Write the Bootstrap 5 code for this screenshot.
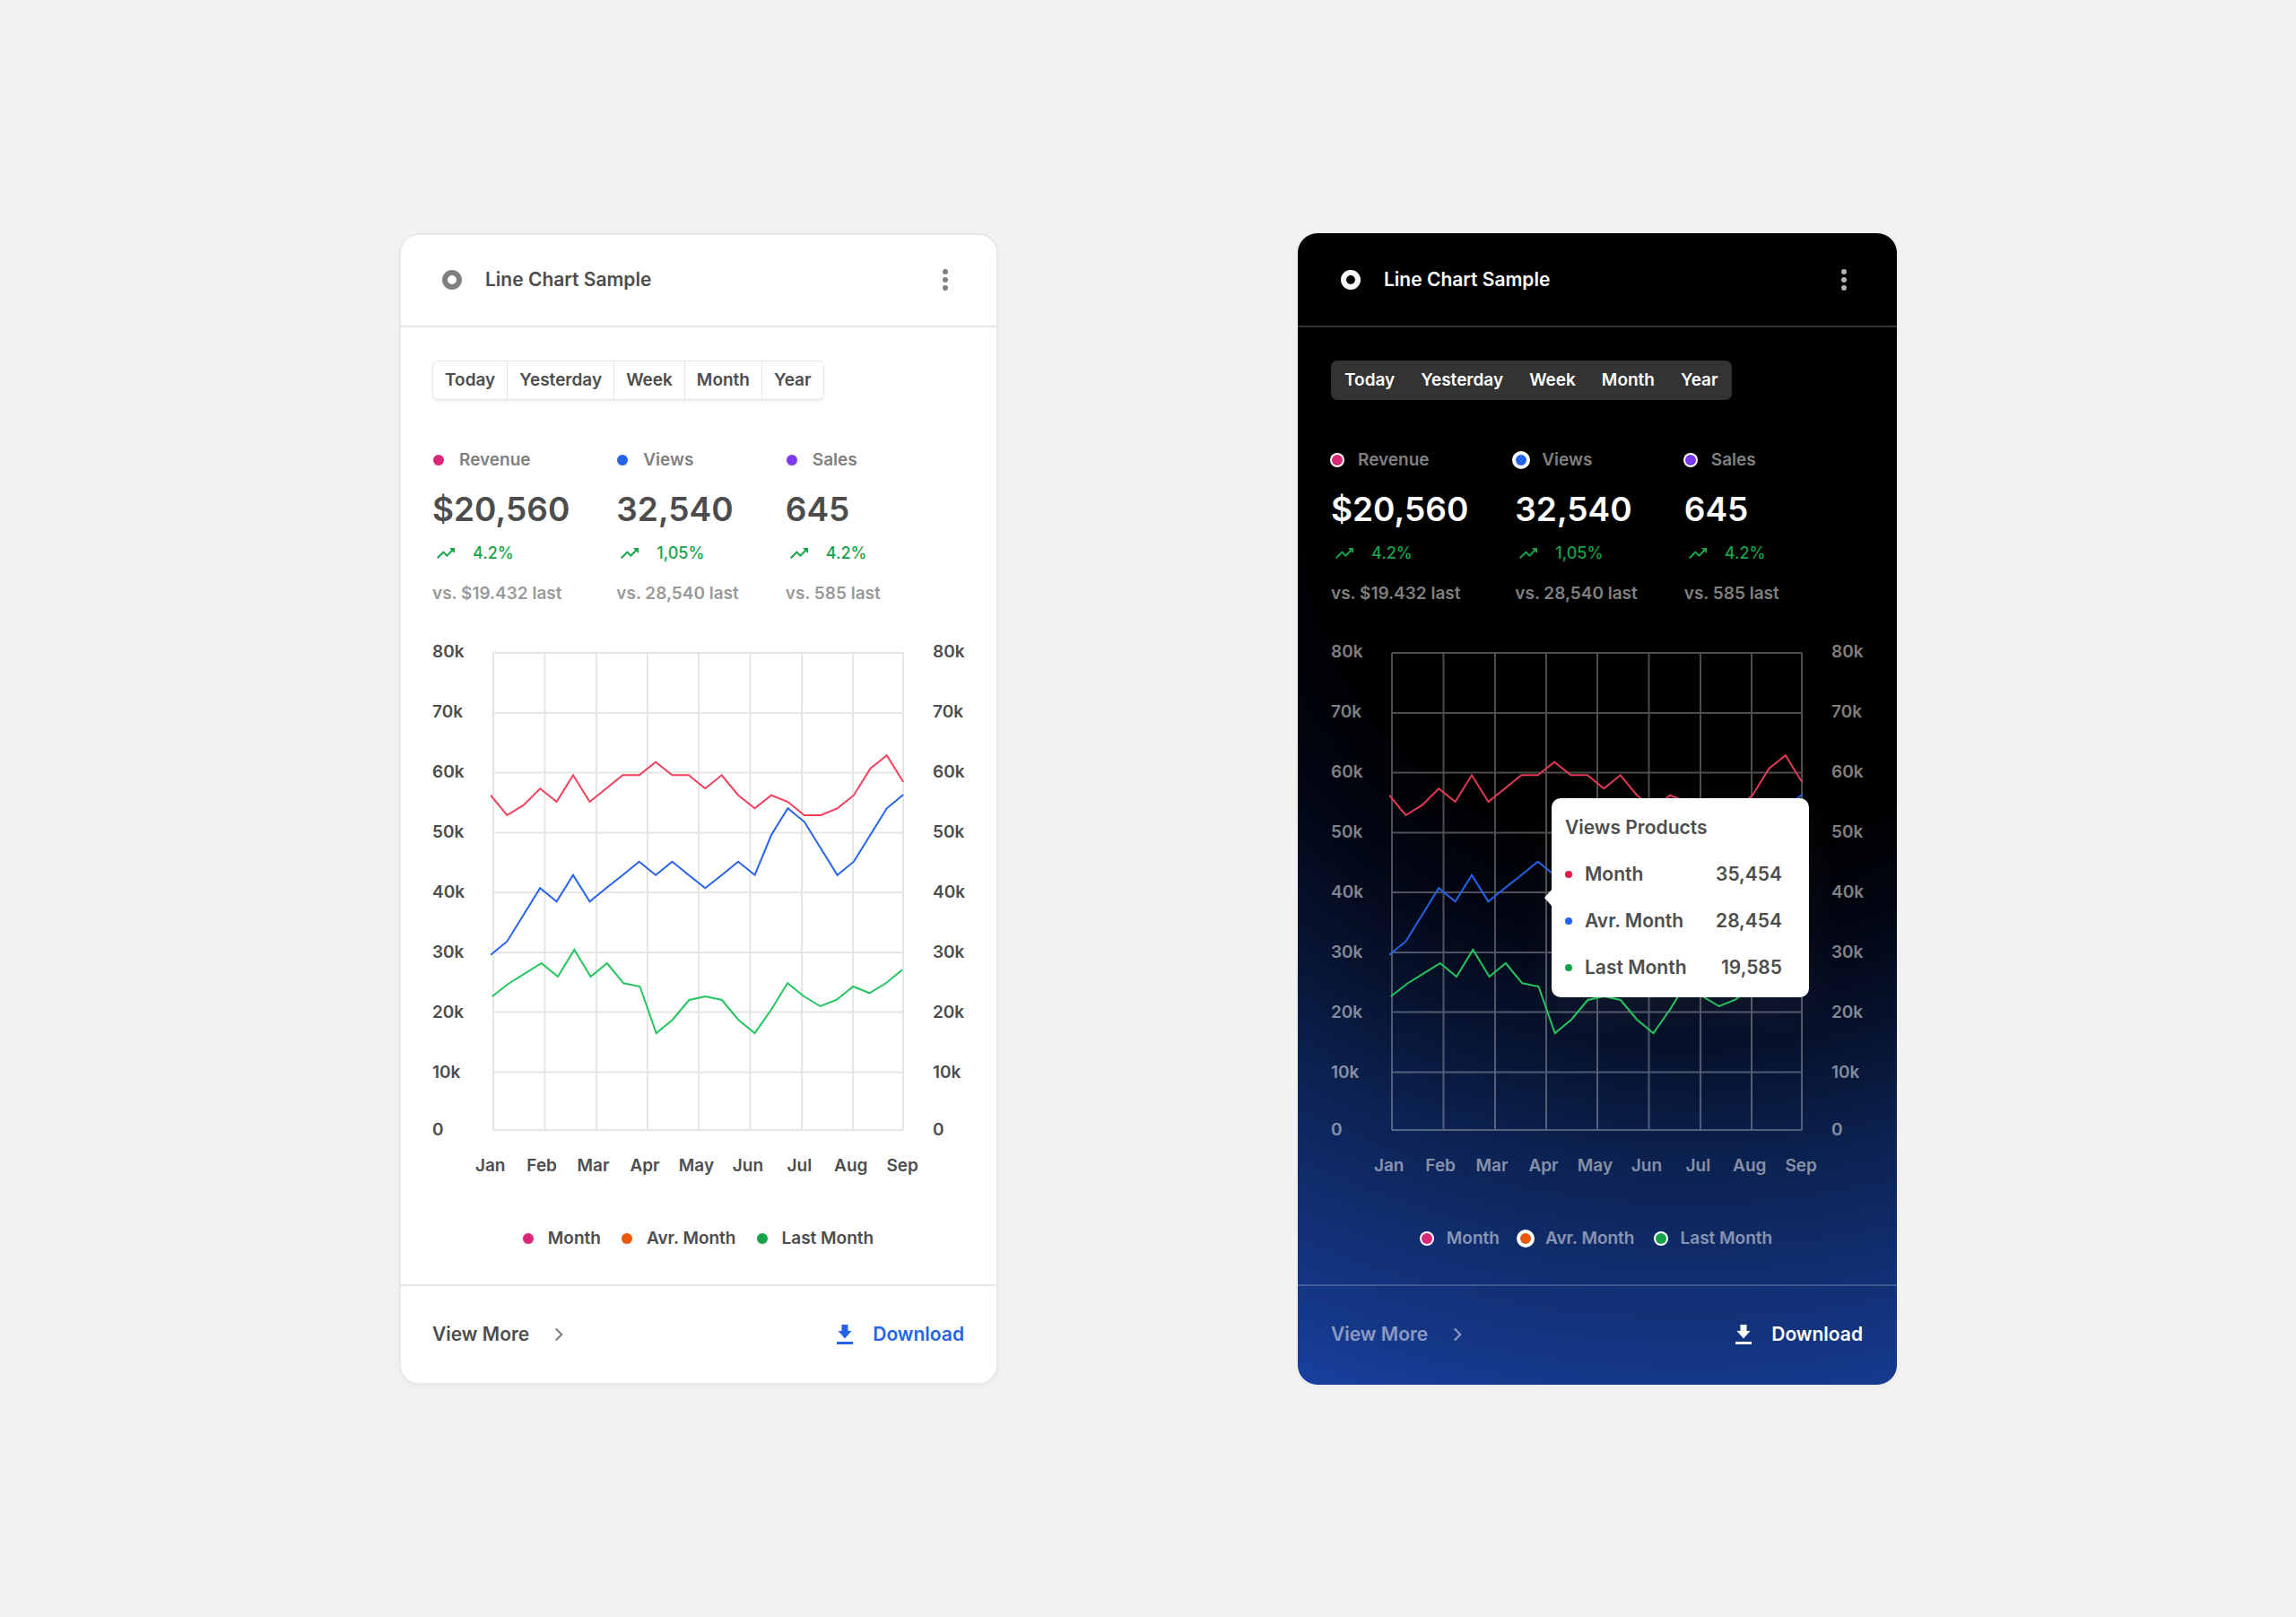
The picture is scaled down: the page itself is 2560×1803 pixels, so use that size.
<!DOCTYPE html>
<html lang="en">
<head>
<meta charset="utf-8">
<meta name="viewport" content="width=device-width, initial-scale=1">
<title>Line Chart Sample</title>
<link rel="stylesheet" href="https://cdn.jsdelivr.net/npm/bootstrap@5.3.0/dist/css/bootstrap.min.css">
<style>
  body { background: #f2f2f2; font-family: Inter, "Liberation Sans", sans-serif; font-size: 19px; line-height: 28px; font-weight: 600; }
  .board { gap: 64px 334px; }

  .chart-card {
    --ink: #4d4d4d; --label: #808080; --faint: #999; --axis: #4d4d4d; --rule: #e5e5e5; --icon: #808080;
    --grid: #e5e5e5; --accent: #2563eb; --up: #16a34a; --ring: 0 2px 3px rgba(0,0,0,.08);
    --red: #f43f5e; --blue: #2563eb; --green: #22c55e;
    width: 100%; max-width: 668px; border: 2px solid #e8e8e8; border-radius: 22px;
    background: #fff; color: var(--ink); box-shadow: 0 3px 6px rgba(0,0,0,.03);
  }
  .chart-card.night {
    --ink: #fff; --label: #808080; --faint: #808080; --axis: rgba(255,255,255,.5); --rule: rgba(255,255,255,.2); --icon: #b3b3b3;
    --grid: rgba(255,255,255,.3); --accent: #fff;
    --ring: 0 0 0 2px #fff;
    --red: #e63956;
    border-color: transparent;
    background:
      linear-gradient(#000 12%, transparent 32%) border-box,
      radial-gradient(ellipse 160% 75% at 65% 25%, #000 38%, #020614 50%, #071431 63%, #0c2252 75%, #112e70 88%, #15388a 100%, #1840a0 108%) border-box;
  }
  .card-top { height: 103px; padding: 0 36px; border-bottom: 2px solid var(--rule); }
  .card-mid { padding: 37px 36px 0 35px; }
  .card-end { height: 110px; padding: 0 36px 0 35px; border-top: 2px solid var(--rule); }
  .night .card-top { margin: 0 -2px; padding: 0 38px; }
  .night .card-end { margin: 0 -2px; padding: 0 38px 0 37px; }
  .fs-head { font-size: 21px; }

  .ring-mark { width: 22px; height: 22px; border: 6px solid var(--icon); border-radius: 50%; margin: 0 26px 0 10px; }
  .night .ring-mark { border-color: #fff; }
  .icon-btn { color: var(--icon); background: none; border: 0; padding: 0; width: 43px; line-height: 0; }

  .range-set { border-radius: 7px; box-shadow: 0 2px 3px rgba(0,0,0,.06); }
  .range-set .btn {
    --bs-btn-color: var(--ink); --bs-btn-border-color: #e6e6e6; --bs-btn-border-width: 1px; --bs-btn-border-radius: 7px;
    --bs-btn-padding-x: 13px; --bs-btn-padding-y: 7px; --bs-btn-font-size: 19px; --bs-btn-font-weight: 600; --bs-btn-line-height: 28px;
    --bs-btn-hover-color: var(--ink); --bs-btn-hover-bg: #f5f5f5; --bs-btn-hover-border-color: #e6e6e6;
  }
  .range-set .btn + .btn { margin-left: 0; }
  .night .range-set { background: #333; }
  .night .range-set .btn { --bs-btn-border-color: transparent; --bs-btn-border-width: 2px; --bs-btn-padding-y: 6px; --bs-btn-hover-bg: #444; --bs-btn-hover-border-color: transparent; }

  .stat-set { gap: 52px; margin-top: 53px; }
  .stat-set h3 { font-size: 19px; line-height: 28px; font-weight: 600; color: var(--label); gap: 17px; margin: 0 0 13px; }
  .stat-set h3 .spot { margin-left: 1px; }
  .stat-value { font-size: 37px; line-height: 56px; }
  .stat-up { color: var(--up); font-size: 18px; font-weight: 500; gap: 18px; padding-left: 3px; margin-top: 7px; }
  .stat-past { color: var(--faint); margin-top: 17px; }
  .spot { display: inline-block; flex: none; width: 12px; height: 12px; border-radius: 50%; box-shadow: var(--ring); }
  .night .spot-on { --ring: 0 0 0 4px #fff; }
  .bg-pink { background: #db2777; } .bg-blue { background: #2563eb; } .bg-violet { background: #7c3aed; }
  .bg-flame { background: #ea580c; } .bg-leaf { background: #16a34a; } .bg-rose { background: #e11d48; }

  .plot { margin-top: 37px; color: var(--axis); }
  .scale-y { width: 65px; line-height: 28px; }
  .scale-y li { height: 67px; }
  .scale-y li:nth-child(8) { height: 64px; }
  .scale-y li:last-child { height: 28px; }
  .scale-r { width: 35px; margin-left: 32px; }
  .plot-area { padding-top: 14px; }
  .plot-area svg { display: block; width: 100%; height: auto; overflow: visible; }
  .scale-x { margin: 25px -27px 0 -29px; }
  .scale-x li { flex: 1 1 0; text-align: center; }

  .legend-set { gap: 23px; margin: 53px 0 37px; }
  .night .legend-set, .night .more-link { color: rgba(255,255,255,.5); }
  .legend-set li { gap: 16px; }
  .foot-link { color: var(--ink); text-decoration: none; gap: 22px; }
  .more-link svg { color: var(--icon); }
  .night .more-link svg { color: inherit; }
  .load-link, .night .load-link { color: var(--accent); }

  .tip-box {
    left: 181px; top: 177px; width: 287px; padding: 19px 30px 19px 15px; z-index: 2;
    background: #fff; color: #4d4d4d; border-radius: 10px; font-size: 21px; box-shadow: 0 20px 50px rgba(255,255,255,.05);
  }
  .tip-box::before { content: ""; position: absolute; left: -8px; top: 102px; border: solid transparent; border-width: 9px 8px 9px 0; border-right-color: #fff; }
  .tip-box li { margin-top: 24px; }
  .tip-box .spot { width: 8px; height: 8px; box-shadow: none; margin-right: 14px; }
</style>
<script src="https://cdn.jsdelivr.net/npm/bootstrap@5.3.0/dist/js/bootstrap.bundle.min.js"></script>
</head>
<body>
<svg class="d-none" aria-hidden="true">
  <symbol id="i-more" viewBox="0 0 32 32"><g fill="currentColor"><circle cx="16" cy="7" r="3"/><circle cx="16" cy="16" r="3"/><circle cx="16" cy="25" r="3"/></g></symbol>
  <symbol id="i-up" viewBox="0 0 24 24"><path fill="currentColor" d="M16 6l2.290 2.290-4.880 4.880-4-4L2 16.590 3.410 18l6-6 4 4 6.300-6.290L22 12V6z"/></symbol>
  <symbol id="i-next" viewBox="0 0 24 24"><path fill="none" stroke="currentColor" stroke-width="2.400" d="M8.500 5l7 7-7 7"/></symbol>
  <symbol id="i-load" viewBox="0 0 18 22"><path fill="currentColor" d="M5.500 0h7v7h4L9 15.500 1.500 7h4zM0 19h18v3H0z"/></symbol>
  <symbol id="chart" viewBox="0 0 461 534">
    <path fill="none" stroke="var(--grid)" stroke-width="2" d="M3 1H460M3 68H460M3 134.500H460M3 201.500H460M3 268H460M3 335H460M3 401.500H460M3 468.500H460M3 533H460M3 1V533M60.500 1V533M118 1V533M175 1V533M232 1V533M289.500 1V533M347 1V533M404 1V533M460 1V533"/>
    <g fill="none" stroke-width="2">
      <polyline stroke="var(--red)" points="0,159.700 18.400,182 36.800,170.700 55.200,152.300 73.600,167 92,137.300 110.500,167 128.900,152.300 147.300,137.300 165.700,137.300 184.100,122.700 202.500,137.300 220.900,137.300 239.300,152.300 257.700,137.300 276.100,159.700 294.600,174.300 313,159.700 331.400,167 349.800,182 368.200,182 386.600,174.300 405,159.700 423.400,130 441.800,115.300 460.200,145"/>
      <polyline stroke="var(--blue)" points="0,337.700 18.400,322.700 36.800,293 55.200,263.300 73.600,278.300 92,248.700 110.500,278.300 128.900,263.300 147.300,248.700 165.700,233.700 184.100,248.700 202.500,233.700 220.900,248.700 239.300,263.300 257.700,248.700 276.100,233.700 294.600,248.700 313,204 331.400,174.300 349.800,189.300 368.200,219 386.600,248.700 405,233.700 423.400,204 441.800,174.300 460.200,159"/>
      <polyline stroke="var(--green)" points="1.800,384 20.100,369.700 38.400,358.300 56.700,347 75,362 93.300,332 111.600,362 129.900,347 148.200,369.300 166.500,373 184.700,425 203,410 221.300,388 239.600,384 257.900,388 276.200,410 294.500,425 312.800,399 331.100,369.300 349.400,384 367.700,395 385.900,387.700 404.200,373 422.500,380.300 440.800,369.300 459.100,354.300"/>
    </g>
  </symbol>
</svg>

<main class="board min-vh-100 d-flex flex-wrap justify-content-center align-items-center align-content-center">
  <article class="chart-card">
    <header class="card-top d-flex align-items-center">
      <span class="ring-mark"></span>
      <h2 class="fs-head fw-semibold mb-0 me-auto">Line Chart Sample</h2>
      <button type="button" class="icon-btn" aria-label="More options"><svg width="32" height="32"><use href="#i-more"/></svg></button>
    </header>
    <div class="card-mid">
      <div class="range-set btn-group" role="group" aria-label="Range">
        <button type="button" class="btn">Today</button>
        <button type="button" class="btn">Yesterday</button>
        <button type="button" class="btn">Week</button>
        <button type="button" class="btn">Month</button>
        <button type="button" class="btn">Year</button>
      </div>
      <div class="stat-set d-flex">
        <section>
          <h3 class="d-flex align-items-center"><span class="spot bg-pink"></span>Revenue</h3>
          <div class="stat-value">$20,560</div>
          <div class="stat-up d-flex align-items-center"><svg width="24" height="24"><use href="#i-up"/></svg>4.2%</div>
          <div class="stat-past">vs. $19.432 last</div>
        </section>
        <section>
          <h3 class="d-flex align-items-center"><span class="spot spot-on bg-blue"></span>Views</h3>
          <div class="stat-value">32,540</div>
          <div class="stat-up d-flex align-items-center"><svg width="24" height="24"><use href="#i-up"/></svg>1,05%</div>
          <div class="stat-past">vs. 28,540 last</div>
        </section>
        <section>
          <h3 class="d-flex align-items-center"><span class="spot bg-violet"></span>Sales</h3>
          <div class="stat-value">645</div>
          <div class="stat-up d-flex align-items-center"><svg width="24" height="24"><use href="#i-up"/></svg>4.2%</div>
          <div class="stat-past">vs. 585 last</div>
        </section>
      </div>
      <div class="plot d-flex">
        <ul class="scale-y list-unstyled mb-0"><li>80k</li><li>70k</li><li>60k</li><li>50k</li><li>40k</li><li>30k</li><li>20k</li><li>10k</li><li>0</li></ul>
        <div class="plot-area flex-grow-1">
          <svg viewBox="0 0 461 534" role="img" aria-label="Line chart"><use href="#chart"/></svg>
          <ul class="scale-x list-unstyled d-flex mb-0"><li>Jan</li><li>Feb</li><li>Mar</li><li>Apr</li><li>May</li><li>Jun</li><li>Jul</li><li>Aug</li><li>Sep</li></ul>
        </div>
        <ul class="scale-y scale-r list-unstyled mb-0"><li>80k</li><li>70k</li><li>60k</li><li>50k</li><li>40k</li><li>30k</li><li>20k</li><li>10k</li><li>0</li></ul>
      </div>
      <ul class="legend-set list-unstyled d-flex justify-content-center">
        <li class="d-flex align-items-center"><span class="spot bg-pink"></span>Month</li>
        <li class="d-flex align-items-center"><span class="spot spot-on bg-flame"></span>Avr. Month</li>
        <li class="d-flex align-items-center"><span class="spot bg-leaf"></span>Last Month</li>
      </ul>
    </div>
    <footer class="card-end d-flex align-items-center justify-content-between fs-head">
      <a href="#" class="foot-link more-link d-flex align-items-center">View More<svg width="22" height="22"><use href="#i-next"/></svg></a>
      <a href="#" class="foot-link load-link d-flex align-items-center"><svg width="18" height="22"><use href="#i-load"/></svg>Download</a>
    </footer>
  </article>

  <article class="chart-card night">
    <header class="card-top d-flex align-items-center">
      <span class="ring-mark"></span>
      <h2 class="fs-head fw-semibold mb-0 me-auto">Line Chart Sample</h2>
      <button type="button" class="icon-btn" aria-label="More options"><svg width="32" height="32"><use href="#i-more"/></svg></button>
    </header>
    <div class="card-mid">
      <div class="range-set btn-group" role="group" aria-label="Range">
        <button type="button" class="btn">Today</button>
        <button type="button" class="btn">Yesterday</button>
        <button type="button" class="btn">Week</button>
        <button type="button" class="btn">Month</button>
        <button type="button" class="btn">Year</button>
      </div>
      <div class="stat-set d-flex">
        <section>
          <h3 class="d-flex align-items-center"><span class="spot bg-pink"></span>Revenue</h3>
          <div class="stat-value">$20,560</div>
          <div class="stat-up d-flex align-items-center"><svg width="24" height="24"><use href="#i-up"/></svg>4.2%</div>
          <div class="stat-past">vs. $19.432 last</div>
        </section>
        <section>
          <h3 class="d-flex align-items-center"><span class="spot spot-on bg-blue"></span>Views</h3>
          <div class="stat-value">32,540</div>
          <div class="stat-up d-flex align-items-center"><svg width="24" height="24"><use href="#i-up"/></svg>1,05%</div>
          <div class="stat-past">vs. 28,540 last</div>
        </section>
        <section>
          <h3 class="d-flex align-items-center"><span class="spot bg-violet"></span>Sales</h3>
          <div class="stat-value">645</div>
          <div class="stat-up d-flex align-items-center"><svg width="24" height="24"><use href="#i-up"/></svg>4.2%</div>
          <div class="stat-past">vs. 585 last</div>
        </section>
      </div>
      <div class="plot d-flex">
        <ul class="scale-y list-unstyled mb-0"><li>80k</li><li>70k</li><li>60k</li><li>50k</li><li>40k</li><li>30k</li><li>20k</li><li>10k</li><li>0</li></ul>
        <div class="plot-area flex-grow-1 position-relative">
          <svg viewBox="0 0 461 534" role="img" aria-label="Line chart"><use href="#chart"/></svg>
          <ul class="scale-x list-unstyled d-flex mb-0"><li>Jan</li><li>Feb</li><li>Mar</li><li>Apr</li><li>May</li><li>Jun</li><li>Jul</li><li>Aug</li><li>Sep</li></ul>
          <div class="tip-box position-absolute" role="tooltip">
            <div>Views Products</div>
            <ul class="list-unstyled mb-0">
              <li class="d-flex align-items-center"><span class="spot bg-rose"></span>Month<span class="ms-auto">35,454</span></li>
              <li class="d-flex align-items-center"><span class="spot bg-blue"></span>Avr. Month<span class="ms-auto">28,454</span></li>
              <li class="d-flex align-items-center"><span class="spot bg-leaf"></span>Last Month<span class="ms-auto">19,585</span></li>
            </ul>
          </div>
        </div>
        <ul class="scale-y scale-r list-unstyled mb-0"><li>80k</li><li>70k</li><li>60k</li><li>50k</li><li>40k</li><li>30k</li><li>20k</li><li>10k</li><li>0</li></ul>
      </div>
      <ul class="legend-set list-unstyled d-flex justify-content-center">
        <li class="d-flex align-items-center"><span class="spot bg-pink"></span>Month</li>
        <li class="d-flex align-items-center"><span class="spot spot-on bg-flame"></span>Avr. Month</li>
        <li class="d-flex align-items-center"><span class="spot bg-leaf"></span>Last Month</li>
      </ul>
    </div>
    <footer class="card-end d-flex align-items-center justify-content-between fs-head">
      <a href="#" class="foot-link more-link d-flex align-items-center">View More<svg width="22" height="22"><use href="#i-next"/></svg></a>
      <a href="#" class="foot-link load-link d-flex align-items-center"><svg width="18" height="22"><use href="#i-load"/></svg>Download</a>
    </footer>
  </article>
</main>
</body>
</html>
